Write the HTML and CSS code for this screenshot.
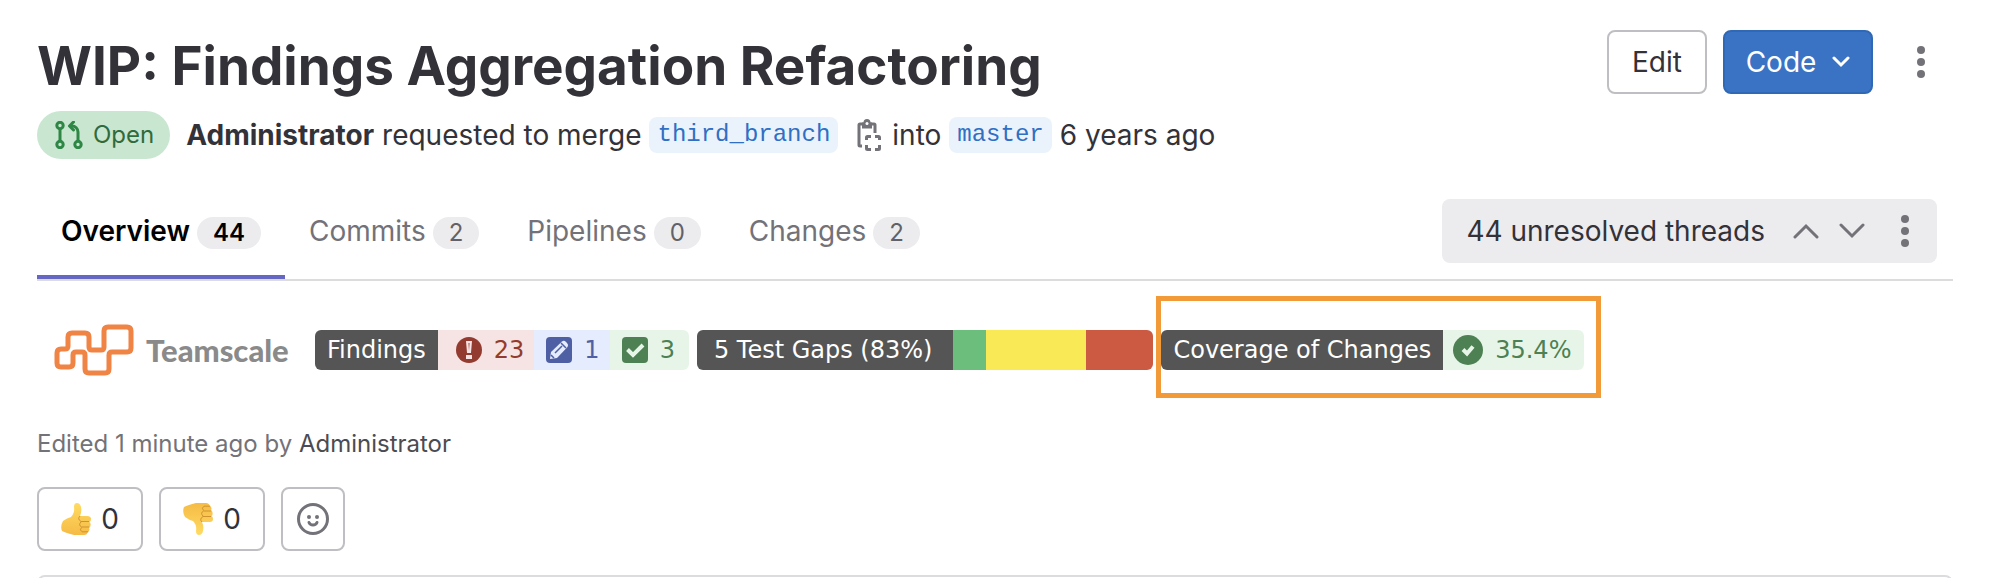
FILE: index.html
```html
<!DOCTYPE html>
<html lang="en">
<head>
  <meta charset="UTF-8" />
  <meta name="viewport" content="width=device-width, initial-scale=1.0"/>
  <title>WIP: Findings Aggregation Refactoring</title>
  <link rel="stylesheet" href="styles.css">
</head>
<body>
  <main class="merge-request">

    <header class="mr-header">
      <h1>WIP: Findings Aggregation Refactoring</h1>
      <div class="header-actions">
        <button class="btn edit-btn" type="button">Edit</button>
        <button class="btn code-btn" type="button">
          Code
          <svg width="18" height="12" viewBox="0 0 18 12"><path d="M2 2l7 7 7-7" fill="none" stroke="#fff" stroke-width="3" stroke-linecap="round"/></svg>
        </button>
        <button class="dots-btn" type="button" aria-label="More actions">
          <svg width="8" height="32" viewBox="0 0 8 32"><circle cx="4" cy="4" r="4"/><circle cx="4" cy="16" r="4"/><circle cx="4" cy="28" r="4"/></svg>
        </button>
      </div>
    </header>

    <div class="mr-meta">
      <span class="state-badge">
        <svg width="28" height="28" viewBox="0 0 28 28" fill="none" stroke="#2f8746" stroke-width="3">
          <circle cx="5" cy="4.500" r="3.200"/><circle cx="5" cy="23.500" r="3.200"/><circle cx="23" cy="23.500" r="3.200"/>
          <path d="M5 8v12"/>
          <path d="M23 20V11a6 6 0 0 0-6-6h-2"/>
          <path d="M18.500 1L14.500 5l4 4" stroke-linecap="round" stroke-linejoin="round"/>
        </svg>
        Open
      </span>
      <strong>Administrator</strong>
      <span>requested to merge</span>
      <a class="branch" href="#source">third_branch</a>
      <button class="copy-btn" type="button" aria-label="Copy branch name">
        <svg width="24" height="32" viewBox="0 0 24 32" fill="none" stroke="#737278" stroke-width="3">
          <path d="M5 27H3a1 1 0 0 1-1-1V6a1 1 0 0 1 1-1h14a1 1 0 0 1 1 1v8"/>
          <path d="M5 3.500h1.500a3.500 3.500 0 0 1 7 0H15v6H5z" fill="#737278" stroke="none"/>
          <circle cx="10" cy="4.500" r="1.500" fill="#fff" stroke="none"/>
          <path d="M9.500 21v-2.500a1 1 0 0 1 1-1H14M18 17.500h3.500a1 1 0 0 1 1 1V21M22.500 26v3.500a1 1 0 0 1-1 1H18M14 30.500h-3.500a1 1 0 0 1-1-1V26"/>
        </svg>
      </button>
      <span>into</span>
      <a class="branch" href="#target">master</a>
      <span>6 years ago</span>
    </div>

    <div class="tabs-row">
      <nav class="tabs">
        <a class="tab active" href="#overview">Overview <span class="count">44</span></a>
        <a class="tab" href="#commits">Commits <span class="count">2</span></a>
        <a class="tab" href="#pipelines">Pipelines <span class="count">0</span></a>
        <a class="tab" href="#changes">Changes <span class="count">2</span></a>
      </nav>
      <div class="threads">
        <span class="threads-text">44 unresolved threads</span>
        <button class="thread-btn" type="button" aria-label="Previous thread">
          <svg width="26" height="16" viewBox="0 0 26 16"><path d="M2 14L13 3l11 11"/></svg>
        </button>
        <button class="thread-btn" type="button" aria-label="Next thread">
          <svg width="26" height="16" viewBox="0 0 26 16"><path d="M2 2l11 11L24 2"/></svg>
        </button>
        <button class="dots-btn" type="button" aria-label="Thread options">
          <svg width="8" height="32" viewBox="0 0 8 32"><circle cx="4" cy="4" r="4"/><circle cx="4" cy="16" r="4"/><circle cx="4" cy="28" r="4"/></svg>
        </button>
      </div>
    </div>

    <section class="teamscale">
      <a class="logo" href="#teamscale">
        <svg width="80" height="52" viewBox="0 0 80 52" fill="none" stroke="#f08445" stroke-width="5">
          <path d="M7 25H11Q14 25 14 22V13Q14 9 18 9H31Q35 9 35 13V23Q35 26 38 26H47Q50 26 50 23V7Q50 3 54 3H73Q77 3 77 7V24Q77 28 73 28H58Q55 28 55 31V45Q55 49 51 49H35Q31 49 31 45V31Q31 28 28 28H22Q19 28 19 31V39Q19 43 15 43H7Q3 43 3 39V29Q3 25 7 25Z"/>
        </svg>
        <span>Teamscale</span>
      </a>

      <div class="badge findings">
        <span class="badge-label">Findings</span>
        <span class="badge-value red">
          <svg width="26" height="26" viewBox="0 0 26 26"><circle cx="13" cy="13" r="13" fill="#933b2f"/><path d="M10 4h6l-1 12h-4zM10 18h6v4h-6z" fill="#f5e4e3"/><path d="M12 6h2l-1 8z" fill="#c98a84"/></svg>
          23
        </span>
        <span class="badge-value blue">
          <svg width="26" height="26" viewBox="0 0 26 26"><rect width="26" height="26" rx="4" fill="#4f5fa3"/><path d="M4 22l1-7L16 4.500q2-1.500 4 .5l1 1q2 2 .5 4L11 21z" fill="#e5ecfd"/><path d="M15 6l5 5M9 16l7-7M5 18l3 3" stroke="#4f5fa3" stroke-width="1.500"/></svg>
          1
        </span>
        <span class="badge-value green">
          <svg width="26" height="26" viewBox="0 0 26 26"><rect width="26" height="26" rx="4" fill="#4d8052"/><path d="M5.500 12.500l5.500 5.500L21 8" fill="none" stroke="#e7f5e8" stroke-width="4"/></svg>
          3
        </span>
      </div>

      <div class="badge gaps">
        <span class="badge-label">5 Test Gaps (83%)</span>
        <span class="bar bar-green"></span>
        <span class="bar bar-yellow"></span>
        <span class="bar bar-red"></span>
      </div>

      <div class="highlight">
        <div class="badge coverage">
          <span class="badge-label">Coverage of Changes</span>
          <span class="badge-value green">
            <svg width="30" height="30" viewBox="0 0 30 30"><circle cx="15" cy="15" r="15" fill="#4d8052"/><path d="M10 14.500l4 4 6-7" fill="none" stroke="#e7f5e8" stroke-width="4"/></svg>
            35.4%
          </span>
        </div>
      </div>
    </section>

    <p class="edited">Edited 1 minute ago by <a href="#admin">Administrator</a></p>

    <div class="awards">
      <button class="btn award" type="button" aria-label="Thumbs up">
        <svg width="30" height="32" viewBox="0 0 30 32"><use href="#thumb"/></svg>
        0
      </button>
      <button class="btn award" type="button" aria-label="Thumbs down">
        <svg width="30" height="32" viewBox="0 0 30 32"><use href="#thumb" transform="matrix(1 0 0 -1 0 32)"/></svg>
        0
      </button>
      <button class="btn smiley" type="button" aria-label="Add reaction">
        <svg width="32" height="32" viewBox="0 0 32 32" fill="none" stroke="#737278" stroke-width="3">
          <circle cx="16" cy="16" r="14.500"/>
          <path d="M12 19.500q1 2.500 4 2.500t4-2.500" stroke-linecap="round"/>
          <circle cx="12" cy="14" r="2" fill="#737278" stroke="none"/><circle cx="20" cy="14" r="2" fill="#737278" stroke="none"/>
        </svg>
      </button>
    </div>

    <div class="activity"></div>
  </main>

  <!-- shared thumb drawing -->
  <svg class="defs" width="0" height="0" aria-hidden="true">
    <defs>
      <linearGradient id="skin" x1="0" y1="0" x2="0" y2="1">
        <stop offset="0" stop-color="#ffdb62"/><stop offset="1" stop-color="#f5bb45"/>
      </linearGradient>
      <g id="thumb">
        <path d="M2 18Q6 15 10 14Q14 10 13 4Q13 0 16 0Q19 0 20 4Q21 9 19 13H27Q30 13.500 30 16T28.500 19Q30 20 29.500 22.500T28 25Q29 26 28 28T26.500 29.500Q26 32 23 32H13Q5 30 1 28Q-1 23 2 18Z" fill="url(#skin)"/>
        <path d="M19 13Q16 16 20 18.500H28M20 19Q17 22 20.500 24H28M20.500 24.500Q18 27 21 28.800H27" fill="none" stroke="#cf9230" stroke-width="1"/>
      </g>
    </defs>
  </svg>
</body>
</html>
```
FILE: styles.css
```css
* {
  box-sizing: border-box;
  margin: 0;
  padding: 0;
}

body {
  background: #fff;
  color: #333238;
  font-family: 'Inter', sans-serif;
  font-size: 28px;
  line-height: 40px;
}

a {
  color: inherit;
  text-decoration: none;
}

button {
  font: inherit;
  color: inherit;
  background: none;
  border: none;
  cursor: pointer;
}

svg {
  display: block;
  flex-shrink: 0;
}

.defs {
  position: absolute;
  top: 0;
}

.merge-request {
  padding: 30px 37px 0;
}

/* title and actions */
.mr-header {
  display: flex;
  justify-content: space-between;
  align-items: center;
}

h1 {
  font-size: 53px;
  line-height: 72px;
  font-weight: 650;
}

.header-actions {
  display: flex;
  align-items: center;
  margin-bottom: 8px;
  padding-right: 28px;
}

.btn {
  display: flex;
  align-items: center;
  justify-content: center;
  height: 64px;
  border: 2px solid #bfbfc3;
  border-radius: 8px;
  background: #fff;
}

.edit-btn {
  width: 100px;
  margin-right: 16px;
}

.code-btn {
  width: 150px;
  gap: 16px;
  margin-right: 44px;
  color: #fff;
  background: #3b73c4;
  border-color: #2f68b4;
}

.dots-btn svg {
  fill: #737278;
}

/* status line */
.mr-meta {
  display: flex;
  align-items: center;
  gap: 8px;
  margin-top: 9px;
}

.state-badge {
  display: flex;
  align-items: center;
  gap: 10px;
  height: 48px;
  padding: 0 16px 0 18px;
  margin-right: 8px;
  border-radius: 24px;
  background: #c9e6d0;
  color: #2f6b3c;
  font-size: 24px;
}

.branch {
  padding: 0 8px;
  border-radius: 8px;
  background: #eaf3fb;
  color: #2f6fc4;
  font-family: 'Liberation Mono', monospace;
  font-size: 24px;
  line-height: 36px;
}

.copy-btn {
  margin: 0 3px 0 11px;
}

/* tabs */
.tabs-row {
  display: flex;
  justify-content: space-between;
  align-items: center;
  margin-top: 24px;
  border-bottom: 2px solid #dcdcde;
}

.tabs {
  display: flex;
}

.tab {
  display: flex;
  align-items: center;
  gap: 7px;
  height: 96px;
  padding: 4px 24px 0;
  color: #737278;
  border-bottom: 4px solid transparent;
}

.tab.active {
  color: #000;
  font-weight: 600;
  border-bottom-color: #6666c4;
}

.count {
  margin-top: 4px;
  padding: 0 16px;
  border-radius: 16px;
  background: #ececef;
  color: #626168;
  font-size: 24px;
  line-height: 32px;
}

.active .count {
  color: #000;
}

.threads {
  display: flex;
  align-items: center;
  height: 64px;
  padding: 0 28px 0 24px;
  margin-right: 16px;
  border-radius: 8px;
  background: #ececef;
}

.threads-text {
  margin-right: 8px;
}

.thread-btn {
  margin-left: 20px;
}

.thread-btn svg {
  fill: none;
  stroke: #737278;
  stroke-width: 3;
  stroke-linecap: round;
}

.threads .dots-btn {
  margin-left: 36px;
}

/* teamscale badges */
.teamscale {
  display: flex;
  align-items: center;
  height: 102px;
  margin-top: 15px;
  padding-left: 17px;
}

.logo {
  display: flex;
  align-items: center;
  gap: 12px;
  width: 261px;
  margin-top: 6px;
  color: #8a8a8a;
  font-family: 'Lato', sans-serif;
  font-size: 31px;
  font-weight: 900;
}

.badge {
  display: flex;
  height: 40px;
  margin-top: 6px;
  border-radius: 6px;
  overflow: hidden;
  font-family: 'DejaVu Sans', sans-serif;
  font-size: 24px;
}

.gaps {
  margin-left: 8px;
  margin-right: 3px;
}

.badge-label {
  padding: 0 12px;
  background: #555;
  color: #fff;
}

.gaps .badge-label {
  padding: 0 21px 0 17px;
}

.badge-value {
  display: flex;
  align-items: center;
  gap: 12px;
  padding: 0 10px 0 12px;
}

.red {
  padding-left: 18px;
  background: #f5e4e3;
  color: #933b2f;
}

.blue {
  background: #e5ecfd;
  color: #4f5fa3;
}

.green {
  background: #e7f5e8;
  color: #4d8052;
}

.findings .green {
  padding-right: 14px;
}

.bar-green {
  width: 33px;
  background: #6bbe7b;
}

.bar-yellow {
  width: 100px;
  background: #fae957;
}

.bar-red {
  width: 67px;
  background: #cc5a43;
}

.highlight {
  display: flex;
  align-items: center;
  height: 102px;
  padding-right: 12px;
  border: 5px solid #f29a38;
}

.coverage .badge-value {
  padding: 0 13px 0 10px;
}

/* footer of the description */
.edited {
  margin-top: 26px;
  color: #737278;
  font-size: 24px;
}

.edited a {
  color: #4c4b51;
}

.awards {
  display: flex;
  gap: 16px;
  margin-top: 23px;
}

.award {
  width: 106px;
  gap: 10px;
}

.smiley {
  width: 64px;
}

/* only the top edge of the activity card shows */
.activity {
  height: 3px;
  margin-top: 24px;
  overflow: hidden;
}

.activity::before {
  content: '';
  display: block;
  height: 40px;
  border: 2px solid #dcdcde;
  border-radius: 8px;
}
```
